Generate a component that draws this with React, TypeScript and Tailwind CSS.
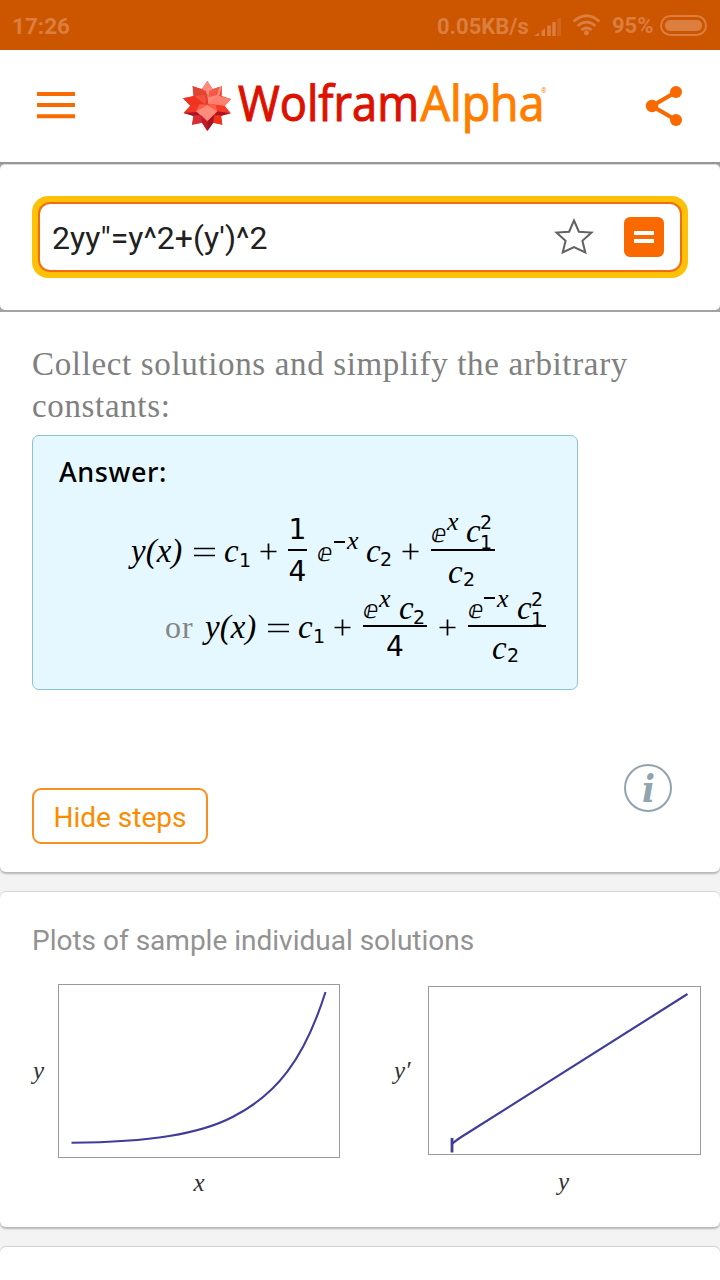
import type { ReactNode } from "react";
import clsx from "clsx";

const it = "font-['Liberation_Serif','DejaVu_Serif',serif] italic text-[33px]";
const sup = "font-['Liberation_Serif',serif] italic text-[26px]";
const num = "font-['DejaVu_Sans',sans-serif] text-[28px]";
const sub = "font-['DejaVu_Sans',sans-serif] text-[19px]";
const dbl = "font-['DejaVu_Sans',sans-serif] text-[25px]";

function G({ c, children }: { c: string; children: ReactNode }) {
  return <span className={clsx("block h-[30px] shrink-0 leading-[30px] whitespace-nowrap", c)}>{children}</span>;
}

function Minus({ c }: { c: string }) {
  return <span className={clsx("block h-[1.5px] shrink-0 bg-black", c)} />;
}

function Plus({ c }: { c: string }) {
  return (
    <svg className={clsx("block shrink-0", c)} width="17" height="17" viewBox="0 0 17 17">
      <path d="M0.500 8.500H16.500M8.500 0.500V16.500" stroke="#000" strokeWidth="1.700" />
    </svg>
  );
}

function Equals({ c }: { c: string }) {
  return (
    <svg className={clsx("block shrink-0", c)} width="21" height="10" viewBox="0 0 21 10">
      <path d="M0 1.500H21M0 8.500H21" stroke="#000" strokeWidth="1.600" />
    </svg>
  );
}

function StatusBar() {
  return (
    <header className="flex h-[50px] items-center bg-[#cc5500] pl-[12px] pr-[13px] font-['Roboto',sans-serif] text-[22.5px] font-bold leading-none text-[#db7e3f]">
      <span className="w-[425px] pt-[3px]">17:26</span>
      <span className="w-[96px] whitespace-nowrap pt-[3px] text-[22px]">0.05KB/s</span>
      <svg width="30" height="22" viewBox="0 0 30 22" className="ml-[1px] mt-[2px] shrink-0">
        <path d="M0 21L5 17.500V21ZM7.500 16L11 13.500V21H7.500Z" fill="#db7e3f" />
        <path d="M15 10.500V21M20 7V21" stroke="#db7e3f" strokeWidth="3.500" />
        <path d="M23.200 4.500L27 2V21H23.200Z" fill="#d26420" />
      </svg>
      <svg width="30" height="22" viewBox="0 0 30 22" className="ml-[8px] shrink-0" fill="none" stroke="#db7e3f" strokeWidth="2.700">
        <path d="M1.500 7.500Q14.500 -4 27.500 7.500M5.500 12Q14.500 4.300 23.500 12M9.500 16Q14.500 12 19.500 16" />
        <circle cx="14.500" cy="18.700" r="2.500" fill="#db7e3f" stroke="none" />
      </svg>
      <span className="ml-[10px] w-[48px] shrink-0 whitespace-nowrap pt-[2px] text-[22px]">95%</span>
      <span className="flex h-[21px] w-[47px] shrink-0 rounded-full border-2 border-[#db7e3f] p-[3px]">
        <span className="flex-1 rounded-[5px] bg-[#db7e3f]" />
      </span>
    </header>
  );
}

function Logo() {
  return (
    <svg width="390" height="90" viewBox="170 60 390 90" className="block" role="img">
      <g transform="translate(170 70) scale(.33333)">
        <path d="M112 33L128 57L156 49L155 78L183 87L164 108L182 130L153 137L157 164L130 158L112 183L96 158L66 164L70 137L41 129L61 107L39 85L70 79L68 49L96 57Z" fill="#e83a27" />
        <path d="M112 33L128 57L112 76L96 57Z" fill="#ff8a7d" />
        <path d="M68 49L107 62L112 76L105 105L74 79Z" fill="#f2513d" />
        <path d="M68 49L74 79L104 74L112 103L112 76L104 64Z" fill="#e04433" />
        <path d="M156 49L120 62L112 76L115 103L148 78Z" fill="#ff8878" />
        <path d="M148 50L142 75L115 82L118 63Z" fill="#f15a48" />
        <path d="M39 85L72 78L106 104L61 107Z" fill="#f03420" />
        <path d="M183 87L146 77L115 103L164 108Z" fill="#ff806e" />
        <path d="M41 129L61 107L96 103L82 132Z" fill="#f13622" />
        <path d="M41 129L82 126L96 140L70 138Z" fill="#a91524" />
        <path d="M182 130L164 108L127 103L142 132Z" fill="#f43b26" />
        <path d="M182 130L142 124L128 141L153 138Z" fill="#ab1420" />
        <path d="M112 104L142 124L112 154L78 124Z" fill="#ff8b7b" />
        <path d="M112 104L78 124L88 103ZM112 104L142 124L136 103Z" fill="#f9604c" />
        <path d="M66 164L72 136L92 136L96 158Z" fill="#d72e36" />
        <path d="M157 164L153 136L133 136L130 158Z" fill="#f33117" />
        <path d="M92 135L112 154L112 183L96 158Z" fill="#c01c30" />
        <path d="M132 135L112 154L112 183L130 158Z" fill="#a51322" />
      </g>
      <g strokeWidth="1.100" fontSize="49.500" className="font-['Open_Sans',sans-serif]">
        <text x="238" y="120.500" textLength="181" lengthAdjust="spacingAndGlyphs" fill="#dd1100" stroke="#dd1100">Wolfram</text>
        <text x="420.500" y="120.500" textLength="124" lengthAdjust="spacingAndGlyphs" fill="#ff7e00" stroke="#ff7e00">Alpha</text>
      </g>
      <text x="541" y="93" fontSize="6.500" fill="#ff7e00" className="font-['Open_Sans',sans-serif]">®</text>
    </svg>
  );
}

function TopNav() {
  return (
    <nav className="flex h-[114px] items-start border-b-2 border-[#979797] pl-[37px]">
      <svg width="38" height="28" viewBox="0 0 38 28" className="mt-[41px]">
        <path d="M0 3H38M0 14H38M0 25.300H38" stroke="#f96a00" strokeWidth="4" />
      </svg>
      <div className="ml-[95px] mt-[10px]"><Logo /></div>
      <svg width="38" height="42" viewBox="0 0 38 42" className="ml-[85px] mt-[35px]">
        <path d="M31 7L7 21L31 35" fill="none" stroke="#fa6900" strokeWidth="4.200" />
        <g fill="#fa6900"><circle cx="31" cy="7" r="6" /><circle cx="7" cy="21" r="6.200" /><circle cx="31" cy="35" r="6" /></g>
      </svg>
    </nav>
  );
}

function SearchBar() {
  return (
    <section className="h-[148px] bg-[#a3a3a3] pb-[2px]">
      <div className="h-[146px] rounded-[5px] border-t border-[#dcdcdc] bg-white px-8 pt-[31px]">
        <div className="h-[82px] rounded-[16px] bg-[#ffc107] p-[6px]">
          <div className="flex h-[70px] items-center rounded-[12px] border-2 border-[#f16d12] bg-white pl-[12px] pr-[16px]">
            <span className="flex-1 pt-[2px] font-['Roboto',sans-serif] text-[32px] leading-none text-[#212121]">2yy"=y^2+(y')^2</span>
            <svg width="40" height="40" viewBox="0 0 40 40">
              <path d="M20 3.500L24.900 14.700L37.500 15.600L28.400 23.800L31.300 35.500L20 30L8.700 35.500L11.600 23.800L2.500 15.600L15.100 14.700Z" fill="none" stroke="#616161" strokeWidth="2" />
            </svg>
            <span className="ml-[30px] flex h-10 w-10 flex-col items-center justify-center gap-1 rounded-[6px] bg-[#fa6800]">
              <span className="h-1 w-5 bg-white" />
              <span className="h-1 w-5 bg-white" />
            </span>
          </div>
        </div>
      </div>
    </section>
  );
}

function FormulaOne() {
  return (
    <div className="flex h-[86px] items-start pl-[98px]">
      <G c={clsx(it, "mt-[29px] w-[63px]")}>y(x)</G>
      <Equals c="mt-[40px]" />
      <G c={clsx(it, "ml-[9px] mt-[29px] w-[15px]")}>c</G>
      <G c={clsx(sub, "mt-[38px] w-[21px]")}>1</G>
      <Plus c="mt-[36px]" />
      <div className="ml-[11px] flex w-[19px] flex-col items-center">
        <G c={clsx(num, "mt-[8px]")}>1</G>
        <span className="mt-[4px] block h-[2px] w-full bg-black" />
        <G c={clsx(num, "mt-[6px]")}>4</G>
      </div>
      <G c={clsx(dbl, "ml-[10px] mt-[31px] w-[17px]")}>ⅇ</G>
      <Minus c="mt-[34px] w-[11px]" />
      <G c={clsx(sup, "ml-[2px] mt-[19px] w-[19px]")}>x</G>
      <G c={clsx(it, "mt-[29px] w-[14px]")}>c</G>
      <G c={clsx(sub, "mt-[37px] w-[22px]")}>2</G>
      <Plus c="mt-[36px]" />
      <div className="ml-[12px] flex w-[64px] flex-col">
        <div className="flex h-[42px] items-start">
          <G c={clsx(dbl, "mt-[12px] w-[16px]")}>ⅇ</G>
          <G c={clsx(sup, "w-[19px]")}>x</G>
          <G c={clsx(it, "mt-[9px] w-[14px]")}>c</G>
          <div className="flex flex-col">
            <G c={sub}>2</G>
            <G c={clsx(sub, "mt-[-10px]")}>1</G>
          </div>
        </div>
        <span className="block h-[2px] bg-black" />
        <div className="flex items-start pl-[17px]">
          <G c={clsx(it, "mt-[6px] w-[15px]")}>c</G>
          <G c={clsx(sub, "mt-[13px]")}>2</G>
        </div>
      </div>
    </div>
  );
}

function FormulaTwo() {
  return (
    <div className="flex h-[86px] items-start pl-[132px]">
      <G c="mt-[19px] w-[40px] font-['Liberation_Serif',serif] text-[32px] tracking-[1px] text-[#858585]">or</G>
      <G c={clsx(it, "mt-[19px] w-[63px]")}>y(x)</G>
      <Equals c="mt-[30px]" />
      <G c={clsx(it, "ml-[9px] mt-[19px] w-[15px]")}>c</G>
      <G c={clsx(sub, "mt-[28px] w-[21px]")}>1</G>
      <Plus c="mt-[26px]" />
      <div className="ml-[12px] flex w-[64px] flex-col">
        <div className="flex h-[32px] items-start">
          <G c={clsx(dbl, "mt-[2px] w-[16px]")}>ⅇ</G>
          <G c={clsx(sup, "mt-[-9px] w-[20px]")}>x</G>
          <G c={clsx(it, "w-[14px]")}>c</G>
          <G c={clsx(sub, "mt-[9px]")}>2</G>
        </div>
        <span className="block h-[2px] bg-black" />
        <G c={clsx(num, "mt-[5px] text-center")}>4</G>
      </div>
      <Plus c="ml-[12px] mt-[26px]" />
      <div className="ml-[12px] flex w-[78px] flex-col">
        <div className="flex h-[32px] items-start">
          <G c={clsx(dbl, "mt-[2px] w-[16px]")}>ⅇ</G>
          <Minus c="mt-[4px] w-[11px]" />
          <G c={clsx(sup, "ml-[2px] mt-[-9px] w-[20px]")}>x</G>
          <G c={clsx(it, "w-[14px]")}>c</G>
          <div className="mt-[-9px] flex flex-col">
            <G c={sub}>2</G>
            <G c={clsx(sub, "mt-[-10px]")}>1</G>
          </div>
        </div>
        <span className="block h-[2px] bg-black" />
        <div className="flex items-start pl-[24px]">
          <G c={clsx(it, "mt-[6px] w-[15px]")}>c</G>
          <G c={clsx(sub, "mt-[13px]")}>2</G>
        </div>
      </div>
    </div>
  );
}

function StepsCard() {
  return (
    <section className="h-[560px] rounded-b-[6px] bg-white px-8 pt-[31px] shadow-[0_2px_2px_rgba(0,0,0,0.25)]">
      <p className="h-[92px] whitespace-nowrap font-['Liberation_Serif',serif] text-[33px] leading-[42px] tracking-[0.65px] text-[#808080]">
        Collect solutions and simplify the arbitrary
        <br />
        constants:
      </p>
      <div className="h-[255px] w-[546px] rounded-[7px] border border-[#8cc3d2] bg-[#e6f8ff]">
        <h2 className="h-[71px] pl-[26px] pt-[17px] font-['Noto_Sans',sans-serif] text-[27px] font-medium leading-[38px] tracking-[0.600px] text-black">Answer:</h2>
        <FormulaOne />
        <FormulaTwo />
      </div>
      <div className="mt-[74px] flex items-start justify-between pr-[16px]">
        <button className="mt-[24px] h-[56px] w-[176px] rounded-[9px] border-2 border-[#f7901e] pt-[4px] font-['Roboto',sans-serif] text-[28px] leading-none text-[#fb8c00]">Hide steps</button>
        <svg width="48" height="48" viewBox="0 0 48 48">
          <circle cx="24" cy="24" r="23" fill="none" stroke="#90a4ae" strokeWidth="2" />
          <text x="24.500" y="38" textAnchor="middle" fontSize="38" fontWeight="bold" fontStyle="italic" fill="#90a4ae" className="font-['DejaVu_Serif_Condensed','DejaVu_Serif',serif]">i</text>
        </svg>
      </div>
    </section>
  );
}

function PlotsCard() {
  const label = "font-['Liberation_Serif',serif] italic";
  return (
    <section className="mt-[20px] h-[335px] rounded-[6px] bg-white pt-[32px] shadow-[0_-1px_1px_rgba(0,0,0,0.12),0_2px_2px_rgba(0,0,0,0.25)]">
      <h2 className="h-[56px] pl-8 font-['Roboto',sans-serif] text-[28px] leading-[33px] text-[#929292]">Plots of sample individual solutions</h2>
      <div className="flex">
        <svg width="360" height="220" viewBox="0 980 360 220">
          <rect x="58.500" y="984.500" width="281" height="173" fill="none" stroke="#999" />
          <path d="M71.500 1142.700C150 1142 200 1134 233 1116.700C276 1095 304 1060 325.500 992" fill="none" stroke="#3f3d99" strokeWidth="2.100" />
          <text x="33" y="1079" fontSize="25" fill="#333" className={label}>y</text>
          <text x="193.500" y="1191" fontSize="25" fill="#333" className={label}>x</text>
        </svg>
        <svg width="360" height="220" viewBox="360 980 360 220">
          <rect x="428.500" y="986.500" width="272" height="168" fill="none" stroke="#999" />
          <path d="M452 1144Q456 1140 470 1131.500L687.500 994" fill="none" stroke="#3f3d99" strokeWidth="2.200" />
          <path d="M452 1138V1152.500" stroke="#3f3d99" strokeWidth="2.800" />
          <text x="394" y="1079" fontSize="25" fill="#333" className={label}>y′</text>
          <text x="558" y="1190" fontSize="25" fill="#333" className={label}>y</text>
        </svg>
      </div>
    </section>
  );
}

export default function App() {
  return (
    <main className="flex h-[1280px] w-[720px] flex-col overflow-hidden bg-[#f3f3f3]">
      <StatusBar />
      <div className="bg-white">
        <TopNav />
        <SearchBar />
      </div>
      <StepsCard />
      <PlotsCard />
      <section className="mt-[20px] h-[33px] rounded-t-[6px] bg-white shadow-[0_-1px_1px_rgba(0,0,0,0.14)]" />
    </main>
  );
}
